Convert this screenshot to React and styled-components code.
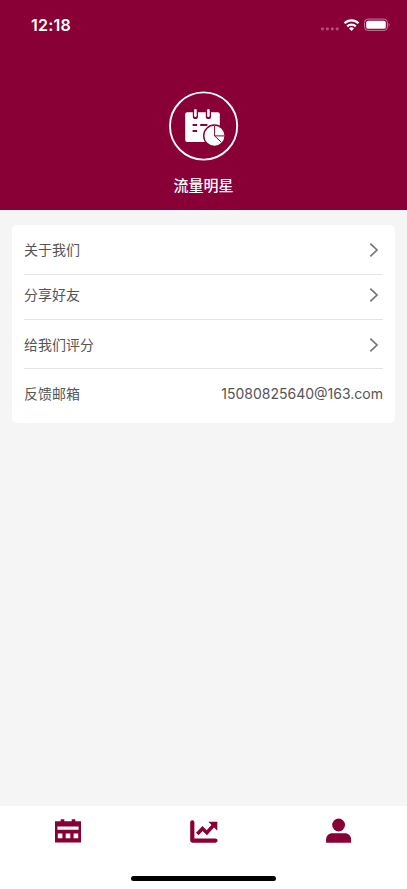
import styled, { createGlobalStyle } from 'styled-components';

const menu = [
    { label: '关于我们', height: 50, shift: 1 },
    { label: '分享好友', height: 45, shift: -5 },
    { label: '给我们评分', height: 49, shift: 1 },
    { label: '反馈邮箱', height: 54, shift: -4, value: '15080825640@163.com' },
];

const StatusIcons = () => (
    <svg width="70" height="16" viewBox="0 0 70 16">
        <g fill="#b5507a">
            <circle cx="2.5" cy="11.8" r="1.6" />
            <circle cx="7.4" cy="11.8" r="1.6" />
            <circle cx="12.3" cy="11.8" r="1.6" />
            <circle cx="17.2" cy="11.8" r="1.6" />
        </g>
        <g fill="none" stroke="#fff" strokeWidth="2.3">
            <path d="M24.5 6.3a10 10 0 0 1 14 0" />
            <path d="M27.2 9.3a6.2 6.2 0 0 1 8.6 0" />
        </g>
        <path d="M31.5 14l-2.5-2.6a3.6 3.6 0 0 1 5 0z" fill="#fff" />
        <rect x="44.6" y="2.1" width="22.8" height="11.3" rx="3.3" fill="none" stroke="#c8799a" />
        <rect x="46.2" y="3.7" width="19.6" height="8.1" rx="1.9" fill="#fff" />
        <path d="M68.6 6v3.6c1.4-.6 1.4-3 0-3.6z" fill="#c8799a" />
    </svg>
);

const Logo = () => (
    <svg width="70" height="70" viewBox="0 0 70 70">
        <circle cx="34.6" cy="35" r="33.6" fill="none" stroke="#fff" strokeWidth="1.9" />
        <rect x="16.2" y="21.2" width="34.6" height="29.8" rx="2" fill="#fff" />
        <g strokeLinecap="round">
            <path d="M26.4 20v5.4M39.4 20v5.4" stroke="#880035" strokeWidth="5.2" />
            <path d="M26.4 19.4v5.4M39.4 19.4v5.4" stroke="#fff" strokeWidth="2.6" />
        </g>
        <path d="M23.6 34h4.5M31.2 34h7.2M23.6 40h4.5" stroke="#880035" strokeWidth="1.8" />
        <circle cx="45.4" cy="44.7" r="10.7" fill="#fff" stroke="#880035" strokeWidth="1.4" />
        <path d="M45.6 35v9.9h9.8M45.6 44.9l6.8 6.4" fill="none" stroke="#880035" strokeWidth="1" />
    </svg>
);

const Arrow = () => (
    <svg width="10" height="16" viewBox="0 0 10 16">
        <path d="M1.3 1.6L8 8l-6.7 6.4" fill="none" stroke="#777" strokeWidth="1.7" />
    </svg>
);

const CalendarIcon = () => (
    <svg width="28" height="28" viewBox="0 0 28 28">
        <path
            fillRule="evenodd"
            d="M1 4.3h5.7V2.3h3.6v2h7.4v-2h3.6v2H27v21.3H1zM3.4 9.4v3.4h21.2V9.4zM3.8 16.4v4.8h4.6v-4.8zM11.7 16.4v4.8h4.6v-4.8zM19.6 16.4v4.8h4.6v-4.8z"
        />
    </svg>
);

const ChartIcon = () => (
    <svg width="28" height="28" viewBox="0 0 28 28">
        <path d="M2.3 5.3v18.3h23.2" fill="none" stroke="#880035" strokeWidth="4.2" strokeLinecap="round" strokeLinejoin="round" />
        <path d="M7.3 17l5.2-5.5 4.4 4.2 6.4-7.2" fill="none" stroke="#880035" strokeWidth="3.5" />
        <path d="M18.3 4.8h9v9z" />
    </svg>
);

const UserIcon = () => (
    <svg width="28" height="28" viewBox="0 0 28 28">
        <circle cx="13.6" cy="8" r="6.4" />
        <path d="M1.1 25.7v-3.2c0-3.8 2.7-6.3 6.4-6.3h12.2c3.7 0 6.4 2.5 6.4 6.3v3.2z" />
    </svg>
);

export default function App() {
    return (
        <Screen>
            <GlobalStyle />
            <Header>
                <StatusBar>
                    <Clock>12:18</Clock>
                    <StatusIcons />
                </StatusBar>
                <Profile>
                    <Logo />
                    <Name>流量明星</Name>
                </Profile>
            </Header>
            <Content>
                <Card>
                    {menu.map(({ label, height, shift, value }) => (
                        <Row key={label} $height={height} $shift={shift}>
                            <span>{label}</span>
                            {value ? <Mail>{value}</Mail> : <Arrow />}
                        </Row>
                    ))}
                </Card>
            </Content>
            <TabBar>
                <Tabs>
                    <Tab><CalendarIcon /></Tab>
                    <Tab><ChartIcon /></Tab>
                    <Tab><UserIcon /></Tab>
                </Tabs>
                <HomeIndicator />
            </TabBar>
        </Screen>
    );
}

const GlobalStyle = createGlobalStyle`
    * {
        box-sizing: border-box;
    }

    body {
        margin: 0;
        font-family: Inter, "Noto Sans CJK SC", sans-serif;
    }

    svg {
        display: block;
        flex-shrink: 0;
    }
`;

const Screen = styled.div`
    height: 100vh;
    display: flex;
    flex-direction: column;
    background: #f5f5f5;
    overflow: hidden;
`;

const Header = styled.header`
    height: 210px;
    flex-shrink: 0;
    background: #880035;
    color: #fff;
`;

const StatusBar = styled.div`
    height: 50px;
    padding: 0 17px 0 31px;
    display: flex;
    align-items: center;
    justify-content: space-between;
`;

const Clock = styled.span`
    font-size: 16px;
    font-weight: 600;
    line-height: 20px;
    letter-spacing: 0.2px;
`;

const Profile = styled.div`
    padding-top: 41px;
    display: flex;
    flex-direction: column;
    align-items: center;
    gap: 14px;
`;

const Name = styled.div`
    font-size: 15px;
    font-weight: 500;
    line-height: 22px;
`;

const Content = styled.main`
    flex: 1;
    padding: 15px 12px;
`;

const Card = styled.div`
    padding: 0 12px;
    background: #fff;
    border-radius: 5px;
`;

const Row = styled.div`
    height: ${({ $height }) => $height}px;
    padding-top: ${({ $shift }) => Math.max($shift, 0)}px;
    padding-bottom: ${({ $shift }) => Math.max(-$shift, 0)}px;
    display: flex;
    align-items: center;
    justify-content: space-between;
    color: #555;
    font-size: 14px;
    line-height: 20px;

    &:not(:last-child) {
        border-bottom: 1px solid #e4e4e4;
    }

    svg {
        margin-right: 4px;
    }
`;

const Mail = styled.span`
    font-size: 14px;
`;

const TabBar = styled.nav`
    height: 83px;
    flex-shrink: 0;
    padding: 11px 0 8px;
    display: flex;
    flex-direction: column;
    align-items: center;
    justify-content: space-between;
    background: #fff;
`;

const Tabs = styled.div`
    width: 100%;
    display: flex;
`;

const Tab = styled.div`
    flex: 1;
    display: flex;
    justify-content: center;

    svg {
        fill: #880035;
    }
`;

const HomeIndicator = styled.div`
    width: 145px;
    height: 5px;
    border-radius: 3px;
    background: #000;
`;
